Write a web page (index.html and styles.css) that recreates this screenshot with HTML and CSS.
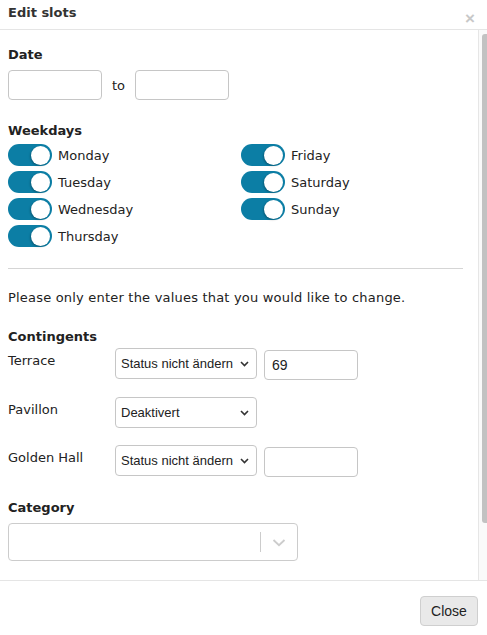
FILE: index.html
```html
<!DOCTYPE html>
<html>
<head>
<meta charset="utf-8">
<link rel="stylesheet" href="styles.css">
</head>
<body>
<div class="modal">
  <div class="header">
    <div class="title">Edit slots</div>
    <div class="close-x">&times;</div>
  </div>
  <div class="body">
    <div class="content">
      <div class="label">Date</div>
      <div class="daterow">
        <input class="text date" type="text">
        <span class="to">to</span>
        <input class="text date" type="text">
      </div>

      <div class="label weekdays-label">Weekdays</div>
      <div class="weekdays">
        <div class="col">
          <div class="day"><span class="toggle"><span class="knob"></span></span>Monday</div>
          <div class="day"><span class="toggle"><span class="knob"></span></span>Tuesday</div>
          <div class="day"><span class="toggle"><span class="knob"></span></span>Wednesday</div>
          <div class="day"><span class="toggle"><span class="knob"></span></span>Thursday</div>
        </div>
        <div class="col">
          <div class="day"><span class="toggle"><span class="knob"></span></span>Friday</div>
          <div class="day"><span class="toggle"><span class="knob"></span></span>Saturday</div>
          <div class="day"><span class="toggle"><span class="knob"></span></span>Sunday</div>
        </div>
      </div>

      <hr class="sep">

      <p class="hint">Please only enter the values that you would like to change.</p>

      <div class="label cont-label">Contingents</div>
      <div class="cont">
        <div class="crow">
          <div class="cname">Terrace</div>
          <div class="sel"><span class="seltext">Status nicht ändern</span><svg class="chev" width="9" height="6" viewBox="0 0 9 6"><path d="M1 1l3.5 3.5L8 1" fill="none" stroke="#333" stroke-width="1.6"/></svg></div>
          <input class="text num" type="text" value="69">
        </div>
        <div class="crow">
          <div class="cname">Pavillon</div>
          <div class="sel"><span class="seltext">Deaktivert</span><svg class="chev" width="9" height="6" viewBox="0 0 9 6"><path d="M1 1l3.5 3.5L8 1" fill="none" stroke="#333" stroke-width="1.6"/></svg></div>
        </div>
        <div class="crow">
          <div class="cname">Golden Hall</div>
          <div class="sel"><span class="seltext">Status nicht ändern</span><svg class="chev" width="9" height="6" viewBox="0 0 9 6"><path d="M1 1l3.5 3.5L8 1" fill="none" stroke="#333" stroke-width="1.6"/></svg></div>
          <input class="text num" type="text">
        </div>
      </div>

      <div class="label cat-label">Category</div>
      <div class="catsel">
        <div class="catval"></div>
        <span class="catsep"></span>
        <svg class="catchev" width="20" height="20" viewBox="0 0 20 20"><path d="M4.5 8l5.5 5.2L15.5 8" fill="none" stroke="#cccccc" stroke-width="1.8"/></svg>
      </div>
    </div>
    <div class="scrollbar"><div class="thumb"></div></div>
  </div>
  <div class="footer">
    <button class="btn">Close</button>
  </div>
</div>
</body>
</html>
```
FILE: styles.css
```css
html, body {
  margin: 0;
  padding: 0;
  background: #fff;
}
body {
  font-family: "DejaVu Sans", Verdana, sans-serif;
  font-size: 13px;
  color: #222;
}
.modal {
  width: 487px;
  height: 635px;
  display: flex;
  flex-direction: column;
  overflow: hidden;
}
.header {
  height: 29px;
  border-bottom: 1px solid #e5e5e5;
  display: flex;
  justify-content: space-between;
  flex: none;
}
.title {
  font-weight: bold;
  font-size: 13px;
  padding: 5px 0 0 8px;
  color: #333;
}
.close-x {
  font-family: "Liberation Sans", Arial, sans-serif;
  font-size: 17px;
  font-weight: bold;
  color: #c8c8c8;
  padding: 10px 12px 0 0;
  line-height: 1;
}
.body {
  height: 550px;
  flex: none;
  display: flex;
  overflow: hidden;
}
.content {
  flex: 1;
  padding: 17px 15px 0 8px;
}
.scrollbar {
  flex: none;
  background: #fafafa;
  border-left: 1px solid #e6e6e6;
  padding: 4px 0 0 3px;
  box-sizing: border-box;
  width: 9px;
}
.thumb {
  height: 489px;
  background: #c2c2c2;
  border-radius: 3px 0 0 3px;
}
.label {
  font-weight: bold;
  font-size: 13px;
  color: #222;
  line-height: 16px;
}
.daterow {
  display: flex;
  align-items: center;
  margin-top: 7px;
}
.text {
  box-sizing: border-box;
  border: 1px solid #c6c6c6;
  border-radius: 4px;
  height: 30px;
  margin: 0;
  padding: 0 7px;
  font-family: "Liberation Sans", Arial, sans-serif;
  font-size: 14px;
  color: #222;
  background: #fff;
  outline: none;
}
.date {
  width: 94px;
}
.to {
  margin: 0 10px 0 10px;
  color: #222;
  width: 13px;
}
.weekdays-label {
  margin-top: 23px;
}
.weekdays {
  display: grid;
  grid-template-columns: 233px 1fr;
  margin-top: 5px;
}
.col {
  display: flex;
  flex-direction: column;
  gap: 5px;
}
.day {
  display: flex;
  align-items: center;
  height: 22px;
  gap: 6px;
  line-height: 1;
}
.toggle {
  width: 44px;
  height: 22px;
  border-radius: 11px;
  background: #0c7ea5;
  position: relative;
  flex: none;
}
.knob {
  position: absolute;
  right: 2px;
  top: 1.5px;
  width: 19px;
  height: 19px;
  border-radius: 50%;
  background: #fff;
  box-shadow: -1px 1px 2px rgba(0,0,0,0.25);
}
.sep {
  border: none;
  border-top: 1px solid #d5d5d5;
  margin: 21px 0 0 0;
}
.hint {
  margin: 21px 0 0 0;
  line-height: 16px;
  letter-spacing: 0.2px;
}
.cont-label {
  margin-top: 23px;
}
.cont {
  margin-top: 3px;
  display: flex;
  flex-direction: column;
  gap: 17px;
}
.crow {
  display: flex;
  align-items: flex-start;
}
.cname {
  width: 107px;
  padding-top: 5px;
  font-size: 13px;
  color: #222;
}
.sel {
  box-sizing: border-box;
  width: 142px;
  height: 31px;
  border: 1px solid #c6c6c6;
  border-radius: 4px;
  display: flex;
  align-items: center;
  justify-content: space-between;
  padding: 0 7px 0 5px;
  font-family: "Liberation Sans", Arial, sans-serif;
  font-size: 13px;
  color: #222;
  background: #fff;
}
.num {
  width: 94px;
  margin-left: 7px;
  margin-top: 2px;
}
.cat-label {
  margin-top: 23px;
}
.catsel {
  box-sizing: border-box;
  margin-top: 7px;
  width: 290px;
  height: 38px;
  border: 1px solid #cccccc;
  border-radius: 4px;
  display: flex;
  align-items: center;
  padding-right: 8px;
}
.catval {
  flex: 1;
}
.catsep {
  width: 1px;
  height: 20px;
  background: #cccccc;
  margin-right: 8px;
}
.footer {
  border-top: 1px solid #e5e5e5;
  flex: 1;
  display: flex;
  justify-content: flex-end;
  align-items: flex-start;
  padding: 15px 9px 0 0;
}
.btn {
  font-family: "Liberation Sans", Arial, sans-serif;
  font-size: 14px;
  color: #222;
  background: #e9e9e9;
  border: 1px solid #cfcfcf;
  border-radius: 4px;
  width: 58px;
  height: 30px;
  padding: 0;
}
```
